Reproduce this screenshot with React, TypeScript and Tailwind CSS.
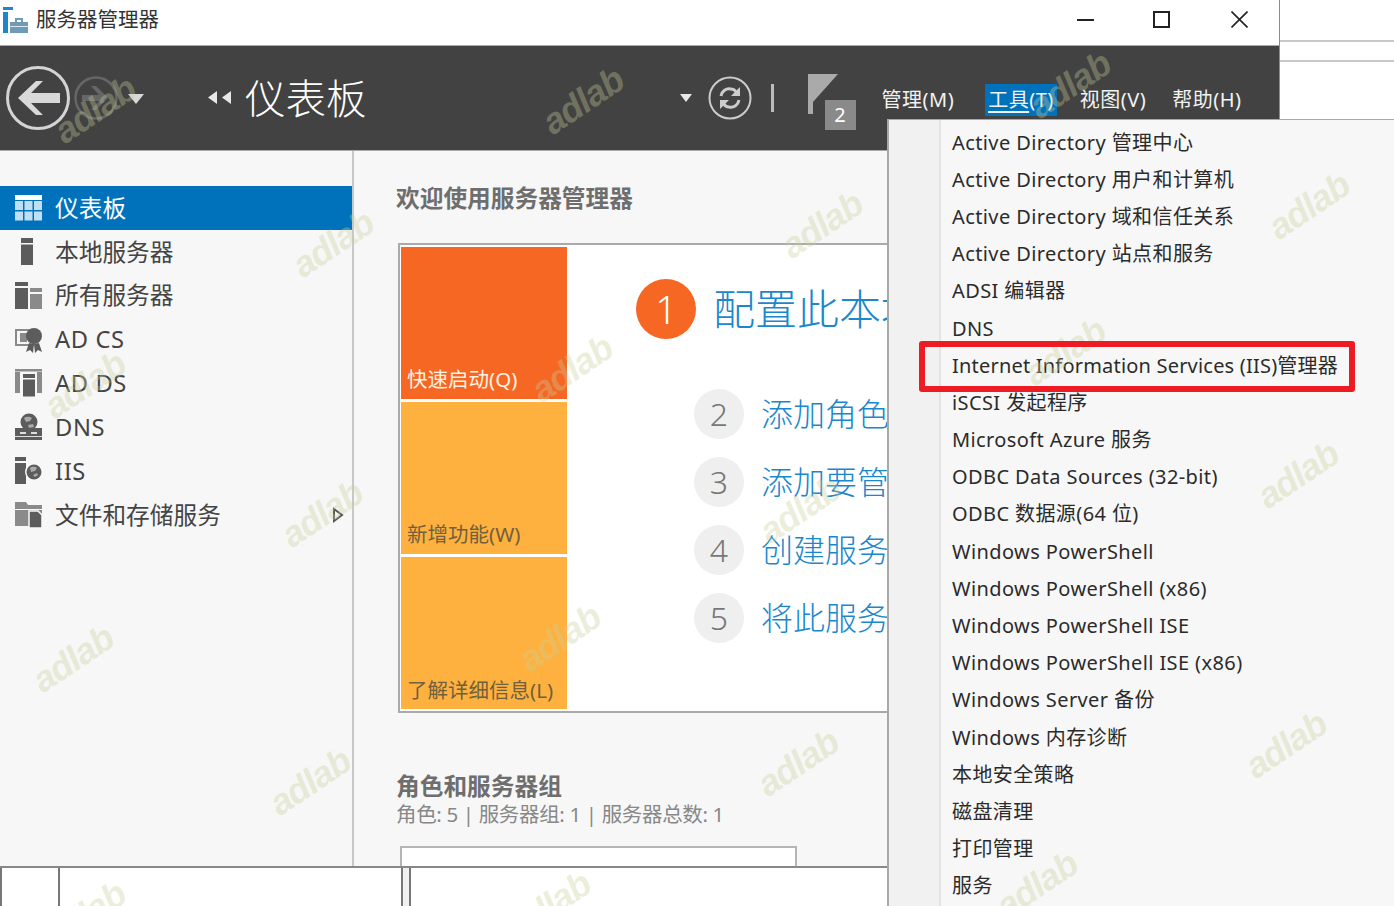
const font = "font-['Noto_Sans','Noto_Sans_CJK_SC',sans-serif]"

const sideItems = [
  { label: "仪表板", icon: "dash" },
  { label: "本地服务器", icon: "local" },
  { label: "所有服务器", icon: "all" },
  { label: "AD CS", icon: "adcs" },
  { label: "AD DS", icon: "adds" },
  { label: "DNS", icon: "dns" },
  { label: "IIS", icon: "iis" },
  { label: "文件和存储服务", icon: "files" },
]

const menuItems = [
  "Active Directory 管理中心",
  "Active Directory 用户和计算机",
  "Active Directory 域和信任关系",
  "Active Directory 站点和服务",
  "ADSI 编辑器",
  "DNS",
  "Internet Information Services (IIS)管理器",
  "iSCSI 发起程序",
  "Microsoft Azure 服务",
  "ODBC Data Sources (32-bit)",
  "ODBC 数据源(64 位)",
  "Windows PowerShell",
  "Windows PowerShell (x86)",
  "Windows PowerShell ISE",
  "Windows PowerShell ISE (x86)",
  "Windows Server 备份",
  "Windows 内存诊断",
  "本地安全策略",
  "磁盘清理",
  "打印管理",
  "服务",
]

const steps = [
  { n: 2, text: "添加角色和功能" },
  { n: 3, text: "添加要管理的其他服务器" },
  { n: 4, text: "创建服务器组" },
  { n: 5, text: "将此服务器连接到云服务" },
]

const marks = [
  [95, 110], [583, 101], [333, 244], [822, 225], [1070, 85], [1309, 206],
  [572, 369], [1065, 352], [322, 514], [1298, 475], [560, 638], [73, 659],
  [798, 763], [1286, 745], [310, 782], [1037, 885], [550, 905], [85, 385],
  [800, 510], [85, 915],
]

const SideIcon = ({ name }: { name: string }) => {
  const d = "#5c5c5c"
  const m = "#8a8a8a"
  if (name === "dash")
    return (
      <svg width="28" height="28" viewBox="0 0 28 28" fill="#bfe0f3">
        <rect x="0" y="1" width="27" height="5" fill="#fff" />
        <rect x="0" y="7" width="8" height="9" />
        <rect x="9.5" y="7" width="8" height="9" />
        <rect x="19" y="7" width="8" height="9" />
        <rect x="0" y="17.5" width="8" height="9" />
        <rect x="9.5" y="17.5" width="8" height="9" />
        <rect x="19" y="17.5" width="8" height="9" />
      </svg>
    )
  if (name === "local")
    return (
      <svg width="28" height="28" viewBox="0 0 28 28" fill={d}>
        <rect x="6" y="0" width="12" height="5" />
        <rect x="6" y="6.5" width="12" height="20.5" />
      </svg>
    )
  if (name === "all")
    return (
      <svg width="28" height="28" viewBox="0 0 28 28">
        <rect x="0" y="0" width="13" height="4" fill={d} />
        <rect x="0" y="6" width="13" height="21" fill={d} />
        <rect x="15" y="6" width="12" height="4" fill={m} />
        <rect x="15" y="12" width="12" height="15" fill={m} />
      </svg>
    )
  if (name === "adcs")
    return (
      <svg width="28" height="28" viewBox="0 0 28 28">
        <rect x="1" y="4" width="17" height="15" fill="none" stroke={m} strokeWidth="2" />
        <rect x="5" y="7" width="7" height="9" fill={m} />
        <path d="M14 17 11 26l4-2 3 3 1-9zM19 18l1 9 3-3 4 2-3-9z" fill={d} />
        <circle cx="19" cy="10" r="8" fill={d} />
      </svg>
    )
  if (name === "adds")
    return (
      <svg width="28" height="28" viewBox="0 0 28 28">
        <rect x="0" y="3" width="5" height="21" fill={m} />
        <rect x="22" y="3" width="5" height="21" fill={m} />
        <rect x="0" y="0" width="27" height="2.5" fill={m} />
        <rect x="8" y="5" width="12" height="4" fill={d} />
        <rect x="8" y="10.5" width="12" height="17" fill={d} />
      </svg>
    )
  if (name === "dns")
    return (
      <svg width="28" height="28" viewBox="0 0 28 28">
        <circle cx="14" cy="9" r="8.5" fill={d} />
        <path d="M9 5c3-2 6-1 8 0l-2 3-4 1zM13 12l5-1 1 3-5 1z" fill="#aaa" />
        <rect x="0" y="15" width="27" height="12" fill={d} />
        <rect x="5" y="19" width="6" height="2" fill="#ddd" />
        <rect x="16" y="19" width="6" height="2" fill="#ddd" />
        <rect x="0" y="23" width="27" height="1" fill="#ddd" />
      </svg>
    )
  if (name === "iis")
    return (
      <svg width="28" height="28" viewBox="0 0 28 28">
        <rect x="0" y="0" width="11" height="4" fill={d} />
        <rect x="0" y="6" width="11" height="21" fill={d} />
        <circle cx="19" cy="15" r="9" fill="#f7f7f7" />
        <circle cx="19" cy="15" r="7.5" fill={d} />
        <path d="M15 11c3-2 6-1 7 0l-2 3-4 1zM18 18l4-2 1 2-3 2z" fill="#aaa" />
      </svg>
    )
  return (
    <svg width="28" height="28" viewBox="0 0 28 28">
      <path d="M0 1h11l2 3h14v4H0z" fill={m} />
      <rect x="0" y="9" width="27" height="16" fill={m} />
      <path d="M14 10h9l4 4v13H14z" fill={d} stroke="#f7f7f7" strokeWidth="1.5" />
    </svg>
  )
}

const Watermarks = () => (
  <div className="pointer-events-none absolute inset-0 overflow-hidden">
    {marks.map(([x, y]) => (
      <span
        key={`${x}-${y}`}
        className="absolute -translate-x-1/2 -translate-y-1/2 -rotate-[34deg] font-['Liberation_Sans',sans-serif] text-[36px] font-bold leading-none tracking-[-1px] text-[#c9cf9b]/35 italic"
        style={{ left: x, top: y }}
      >
        adlab
      </span>
    ))}
  </div>
)

const ToolsMenu = () => (
  <div className="absolute top-[119px] bottom-0 left-[887px] right-0 flex border-t border-l-2 border-[#a8a8a8] bg-[#f7f7f7]">
    <div className="w-[52px] border-r-2 border-[#e3e3e3] bg-[#f1f1f1]" />
    <ul className="pt-[4px] pl-[11px] text-[20px] tracking-[0.4px] text-[#2b2b2b]">
      {menuItems.map((item, i) => (
        <li key={item} className={`flex h-[37.2px] items-center whitespace-nowrap ${i === 6 ? "tracking-[0.2px]" : ""}`}>
          {item}
        </li>
      ))}
    </ul>
  </div>
)

const App = () => {
  return (
    <div className={`relative flex h-[906px] w-[1394px] overflow-hidden bg-white ${font}`}>
      <div className="flex h-full w-[1280px] shrink-0 flex-col border-r border-[#8c8c8c]">
        {/* title bar */}
        <div className="flex h-[45px] shrink-0 items-center pb-[6px] pl-[3px] text-[#333]">
          <svg width="25" height="26" viewBox="0 0 25 26" className="mr-[8px]">
            <rect x="0" y="0" width="10" height="3" fill="#1f86c9" />
            <rect x="0" y="5" width="5" height="21" fill="#1f86c9" />
            <rect x="7" y="15" width="18" height="11" fill="#6f9bb8" />
            <path d="M12 15v-4h8v4h-2v-2h-4v2z" fill="#6f9bb8" />
            <rect x="7" y="19" width="18" height="1" fill="#dfe8ee" />
          </svg>
          <span className="text-[20.5px]">服务器管理器</span>
          <div className="ml-auto flex items-center gap-[59px] pr-[31px]">
            <div className="h-[2px] w-[17px] bg-[#222]" />
            <div className="h-[17px] w-[17px] border-2 border-[#222]" />
            <svg width="17" height="17" viewBox="0 0 17 17" stroke="#222" strokeWidth="1.6" className="ml-[2px]">
              <path d="M0.5 0.5 16.5 16.5M16.5 0.5 0.5 16.5" />
            </svg>
          </div>
        </div>

        {/* dark header */}
        <div className="flex h-[106px] shrink-0 items-center border-y border-[#aaa] bg-[#424242] pl-[6px] text-white">
          <svg width="140" height="66" viewBox="0 0 140 66">
            <circle cx="32" cy="33" r="30.5" fill="none" stroke="#d4d4d4" strokeWidth="3" />
            <path d="M12 33 30 16h7L25 28h29v10H25l12 12h-7z" fill="#d8d8d8" />
            <circle cx="90" cy="33" r="20.5" fill="none" stroke="#666" strokeWidth="2.5" />
            <path d="M102 33 90 21h-5l8 9H76v6h17l-8 9h5z" fill="#666" />
            <path d="M122 29h16l-8 10z" fill="#d8d8d8" />
          </svg>
          <svg width="24" height="14" viewBox="0 0 24 14" fill="#e8e8e8" className="ml-[62px]">
            <path d="M9 0v13L0 6.5zM23 0v13l-9-6.5z" />
          </svg>
          <span className="mt-[2px] ml-[13px] text-[40.5px] leading-none font-light">仪表板</span>
          <svg width="12" height="8" viewBox="0 0 12 8" fill="#e8e8e8" className="ml-[313px]">
            <path d="M0 0h12L6 8z" />
          </svg>
          <svg width="44" height="44" viewBox="0 0 44 44" fill="none" className="ml-[16px]">
            <circle cx="22" cy="22" r="20.5" stroke="#ccc" strokeWidth="2" />
            <path d="M13 20c1-5 5-8 10-7 2 0 4 1 5 3" stroke="#ccc" strokeWidth="3" />
            <path d="M32 11v9h-9z" fill="#ccc" />
            <path d="M31 24c-1 5-5 8-10 7-2 0-4-1-5-3" stroke="#ccc" strokeWidth="3" />
            <path d="M12 33v-9h9z" fill="#ccc" />
          </svg>
          <div className="ml-[19px] h-[28px] w-[3px] bg-[#bbb]" />
          <div className="relative ml-[34px] h-[60px] w-[50px]">
            <svg width="30" height="44" viewBox="0 0 30 44" className="absolute top-[6px] left-0">
              <rect x="0" y="0" width="5" height="40" fill="#aaa" />
              <path d="M5 0h25L5 28z" fill="#aaa" />
            </svg>
            <div className="absolute top-[32px] left-[17px] flex h-[30px] w-[31px] items-center justify-center bg-[#8a8a8a] text-[20px]">
              2
            </div>
          </div>
          <nav className="mt-[4px] flex items-center text-[20px] tracking-[0.5px] text-[#f2f2f2]">
            <span className="ml-[24px]">管理(M)</span>
            <span className="ml-[31px] bg-[#0072bc] px-[3px] py-[1px]">
              <span className="underline underline-offset-4">工具</span>(T)
            </span>
            <span className="ml-[23px]">视图(V)</span>
            <span className="ml-[26px]">帮助(H)</span>
          </nav>
        </div>

        {/* body */}
        <div className="flex h-[715px] shrink-0">
          <aside className="w-[354px] shrink-0 border-r-2 border-[#c8c8c8] bg-[#f7f7f7] pt-[35px]">
            {sideItems.map((item, i) => (
              <div
                key={item.label}
                className={`flex h-[43.86px] items-center gap-[12px] pl-[15px] text-[23.7px] ${
                  i === 0 ? "bg-[#0072bc] text-white" : "text-[#444]"
                }`}
              >
                <SideIcon name={item.icon} />
                <span className={`mt-[1px] ${i >= 3 && i <= 6 ? "tracking-[0.6px]" : ""}`}>{item.label}</span>
                {i === 7 && (
                  <svg width="12" height="16" viewBox="0 0 12 16" fill="none" stroke="#555" strokeWidth="2" className="ml-auto mr-[8px]">
                    <path d="M2 2v12l8-6z" />
                  </svg>
                )}
              </div>
            ))}
          </aside>

          <main className="min-w-0 flex-1 overflow-hidden bg-[#f7f7f7] pt-[33px] pl-[42px]">
            <h1 className="text-[23.7px] leading-[28px] font-bold text-[#6e6e6e]">欢迎使用服务器管理器</h1>
            <div className="mt-[31px] ml-[2px] flex h-[470px] w-[800px] border-2 border-[#aaa] bg-white pt-[2px] pl-[1px]">
              <div className="flex w-[166px] shrink-0 flex-col gap-[3px] text-[20.5px] text-[#fff2e2]">
                <div className="flex h-[152px] items-end bg-[#f56723] px-[6px] pb-[4px]">快速启动(Q)</div>
                <div className="flex h-[152px] items-end bg-[#ffb13f] px-[6px] pb-[4px] text-[#70603c]">新增功能(W)</div>
                <div className="flex h-[152px] items-end bg-[#ffb13f] px-[6px] pb-[3px] text-[#70603c]">了解详细信息(L)</div>
              </div>
              <div className="pt-[32px] pl-[69px]">
                <div className="flex items-center gap-[17px]">
                  <div className="flex h-[60px] w-[60px] items-center justify-center rounded-full bg-[#f56723] text-[38px] font-light text-white">
                    1
                  </div>
                  <span className="text-[42px] leading-none font-light whitespace-nowrap text-[#1b87cc]">配置此本地服务器</span>
                </div>
                <div className="mt-[50px] ml-[58px] flex flex-col gap-[18px]">
                  {steps.map((s) => (
                    <div key={s.n} className="flex items-center gap-[17px]">
                      <div className="flex h-[50px] w-[50px] shrink-0 items-center justify-center rounded-full bg-[#efefef] text-[32px] font-light text-[#777]">
                        {s.n}
                      </div>
                      <span className="text-[32px] leading-none font-light whitespace-nowrap text-[#1b87cc]">{s.text}</span>
                    </div>
                  ))}
                </div>
              </div>
            </div>
            <h2 className="mt-[58px] text-[23.7px] leading-[30px] font-bold text-[#6e6e6e]">角色和服务器组</h2>
            <p className="text-[20.5px] leading-[26px] tracking-[-0.35px] text-[#888]">角色: 5 | 服务器组: 1 | 服务器总数: 1</p>
            <div className="mt-[19px] ml-[4px] h-[30px] w-[397px] border-2 border-[#b5b5b5] bg-white" />
          </main>
        </div>

        {/* bottom strip, cards cut by the window edge */}
        <div className="flex min-h-0 flex-1 border-t-2 border-[#888]">
          <div className="w-[60px] border-x-2 border-[#777]" />
          <div className="w-[343px] border-r-2 border-[#777]" />
          <div className="w-[6px] bg-[#f0f0f0]" />
          <div className="flex-1 border-l-2 border-[#777]" />
        </div>
      </div>

      {/* desktop behind the window */}
      <div className="flex-1">
        <div className="mt-[40px] h-[22px] border-y-2 border-[#c8c8c8]" />
      </div>

      <ToolsMenu />
      <Watermarks />
      <div className="pointer-events-none absolute top-[341px] left-[919px] h-[51px] w-[436px] rounded-[3px] border-[6px] border-[#ed1c24]" />
    </div>
  )
}

export default App
